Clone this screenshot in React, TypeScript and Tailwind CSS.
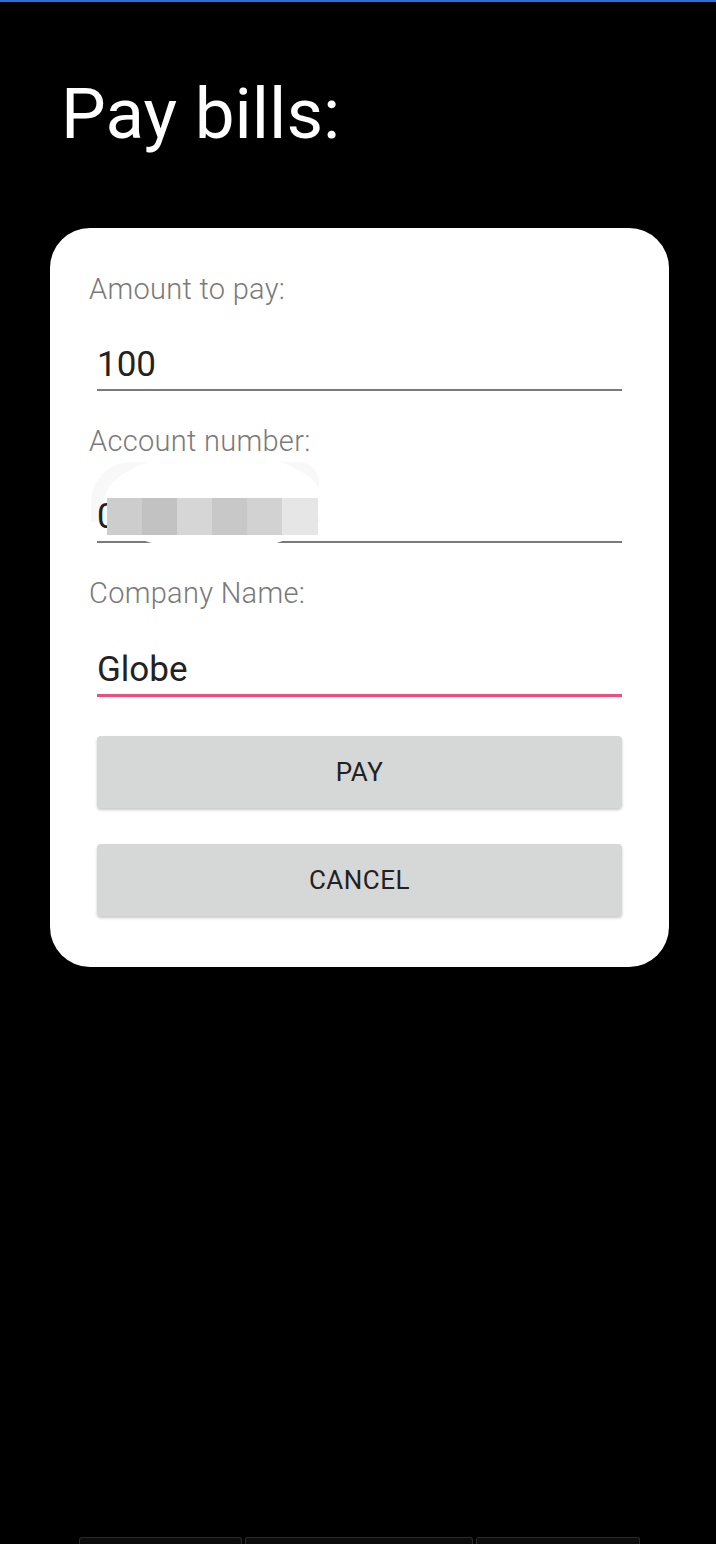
import React from "react";

const font = { fontFamily: "Roboto, 'Noto Sans', Arial, sans-serif" };

function Label({ children }: { children: React.ReactNode }) {
  return (
    <div className="-ml-2 h-[34px] text-[29px] leading-[34px] font-light tracking-[0.3px] text-[#7a7a7a]">
      {children}
    </div>
  );
}

function Field({
  label,
  value,
  focused,
  masked,
}: {
  label: string;
  value: string;
  focused?: boolean;
  masked?: boolean;
}) {
  return (
    <div>
      <Label>{label}</Label>
      <div
        className={`relative flex items-end pb-[4px] ${
          focused
            ? "h-[87px] border-b-[3px] border-[#e8507f]"
            : "h-[85px] border-b-2 border-[#7a7a7a]"
        }`}
      >
        {masked && (
          <div className="absolute inset-0 pointer-events-none">
            {/* smudge left by the screenshot editor */}
            <div className="absolute left-[-6px] top-[4px] w-[228px] h-[60px] rounded-tl-[40px] rounded-tr-[20px] bg-[#f8f8f8]" />
            <div className="absolute left-[7px] top-[-6px] w-[220px] h-[100px] rounded-[50%] bg-white" />
          </div>
        )}
        <span className="relative text-[35px] leading-[40px] text-[#222222]">{value}</span>
        {masked && (
          <div className="absolute left-[10px] top-[40px] h-[37px] flex pointer-events-none">
            <div className="w-[35px] bg-[#cdcdcd]" />
            <div className="w-[35px] bg-[#c2c2c2]" />
            <div className="w-[35px] bg-[#d6d6d6]" />
            <div className="w-[35px] bg-[#c8c8c8]" />
            <div className="w-[35px] bg-[#d2d2d2]" />
            <div className="w-[36px] bg-[#e6e6e6]" />
          </div>
        )}
      </div>
    </div>
  );
}

function Button({ children }: { children: React.ReactNode }) {
  return (
    <button className="w-full h-[72px] rounded-[4px] bg-[#d6d7d7] shadow-[0_2px_3px_rgba(0,0,0,0.22)] text-[26px] text-[#222222] tracking-[0.5px]">
      {children}
    </button>
  );
}

export default function App() {
  return (
    <div className="w-full h-[1544px] bg-black flex flex-col overflow-hidden" style={font}>
      <div className="h-[2px] bg-[#2b6fd0]" />

      <h1 className="mt-[76px] pl-[61px] text-[71px] leading-[71px] text-white font-normal">
        Pay bills:
      </h1>

      {/* Form card */}
      <div className="mt-[79px] ml-[50px] w-[619px] rounded-[40px] bg-white pt-[44px] pb-[51px] px-[47px] flex flex-col">
        <Field label="Amount to pay:" value="100" />
        <div className="mt-[33px]">
          <Field label="Account number:" value="0" masked />
        </div>
        <div className="mt-[33px]">
          <Field label="Company Name:" value="Globe" focused />
        </div>

        <div className="mt-[39px] flex flex-col gap-[36px]">
          <Button>PAY</Button>
          <Button>CANCEL</Button>
        </div>
      </div>

      {/* bottom tabs peeking in */}
      <div className="mt-auto ml-[79px] flex gap-[3px] h-[7px]">
        <div className="w-[163px] rounded-t-[3px] border border-b-0 border-[#2a2a2a] bg-[#0c0c0c]" />
        <div className="w-[228px] rounded-t-[3px] border border-b-0 border-[#2a2a2a] bg-[#0c0c0c]" />
        <div className="w-[164px] rounded-t-[3px] border border-b-0 border-[#2a2a2a] bg-[#0c0c0c]" />
      </div>
    </div>
  );
}
